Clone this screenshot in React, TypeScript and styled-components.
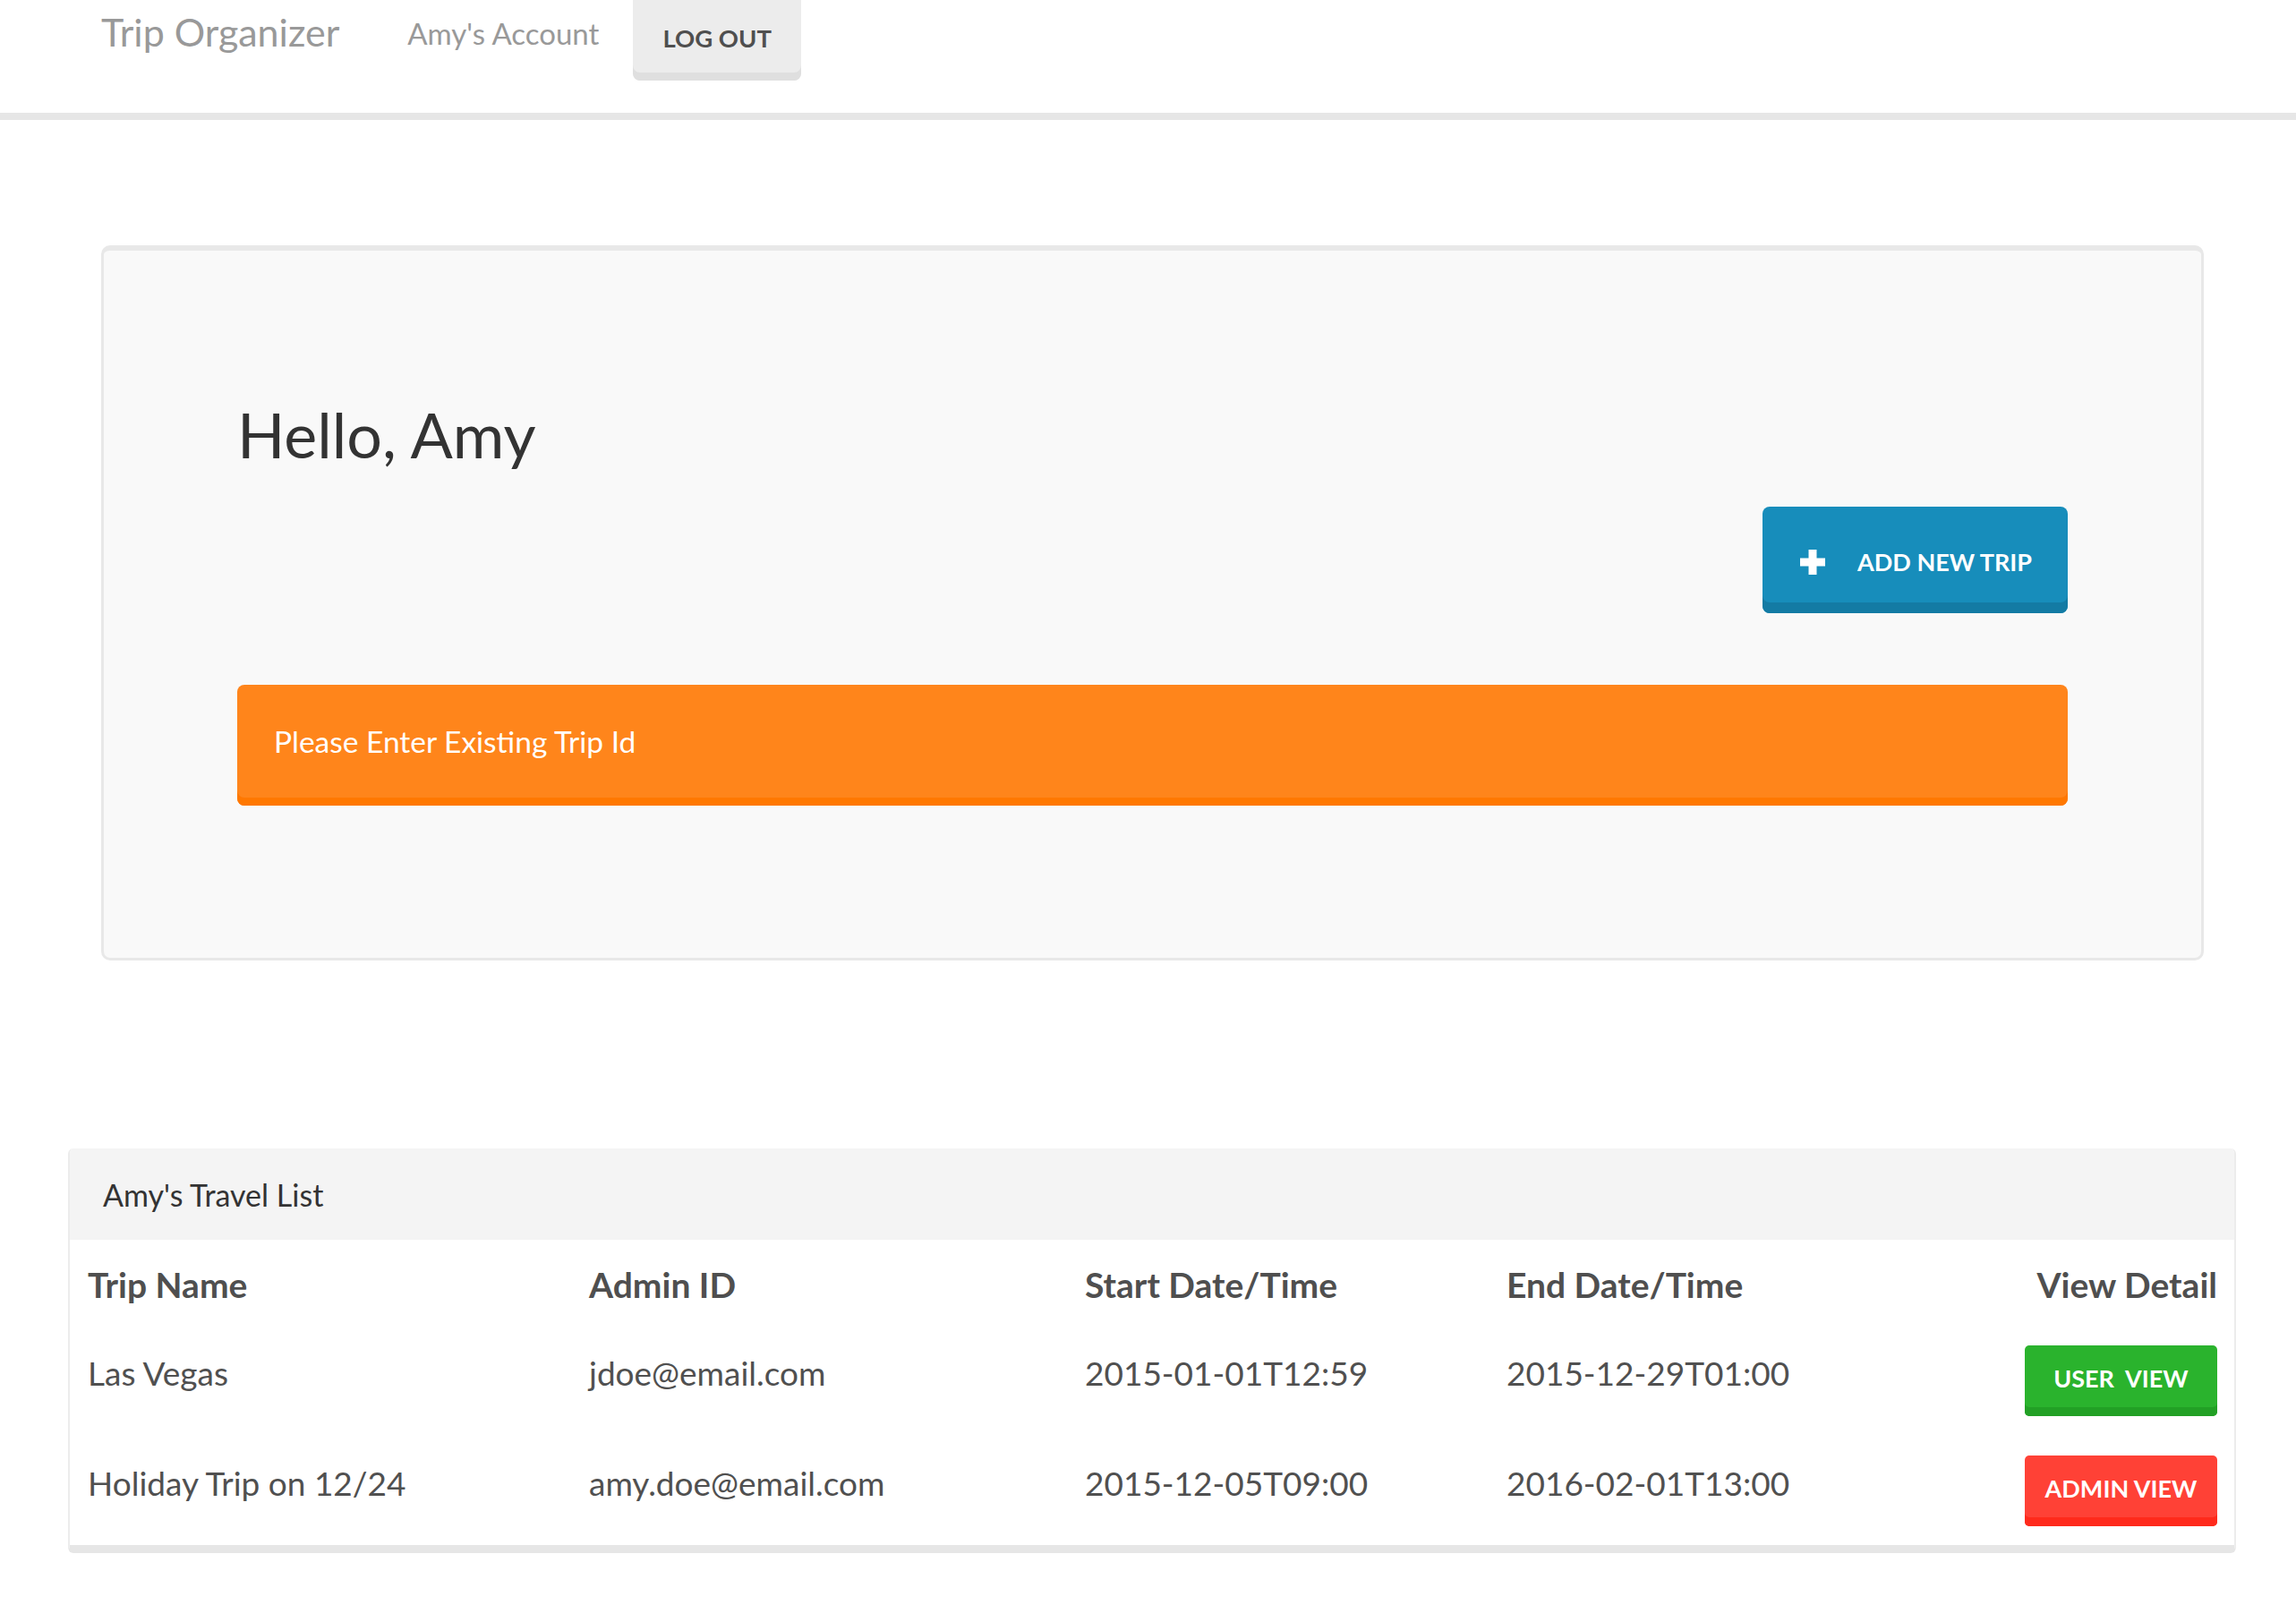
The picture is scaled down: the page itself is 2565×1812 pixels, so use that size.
import React from 'react';
import styled, { createGlobalStyle } from 'styled-components';

const GlobalStyle = createGlobalStyle`
  html, body { margin: 0; padding: 0; background: #ffffff; }
  body { font-family: Lato, "Open Sans", sans-serif; color: #555555; }
  * { box-sizing: border-box; }
`;

const Page = styled.div`
  width: 2565px;
  min-height: 1812px;
  background: #ffffff;
`;

const Navbar = styled.nav`
  height: 134px;
  border-bottom: 8px solid #e6e6e6;
  display: flex;
  align-items: flex-start;
  padding-left: 113px;
`;

const Brand = styled.a`
  font-size: 43px;
  line-height: 72px;
  color: #999999;
  text-decoration: none;
`;

const NavLink = styled.a`
  margin-left: 76px;
  font-size: 33px;
  line-height: 74px;
  color: #999999;
  text-decoration: none;
`;

const NavButton = styled.button`
  margin-left: 38px;
  height: 90px;
  padding: 0 33px 6px;
  border: none;
  border-radius: 0 0 8px 8px;
  background: #ececec;
  box-shadow: inset 0 -9px 0 #dfdfdf;
  color: #4f4f4f;
  font-family: Lato, sans-serif;
  font-weight: 700;
  font-size: 27.5px;
  cursor: pointer;
`;

const Jumbotron = styled.section`
  margin: 140px 0 0 113px;
  width: 2349px;
  height: 799px;
  background: #f9f9f9;
  border: 3px solid #e8e8e8;
  border-top-width: 6px;
  border-radius: 10px;
  padding: 163px 149px 0 149px;
`;

const Greeting = styled.h1`
  margin: 0;
  font-size: 70px;
  line-height: 84px;
  font-weight: 400;
  color: #333333;
`;

const ActionRow = styled.div`
  display: flex;
  justify-content: flex-end;
  margin-top: 39px;
`;

const PrimaryButton = styled.button`
  display: inline-flex;
  align-items: center;
  gap: 36px;
  height: 119px;
  padding: 4px 40px 0 42px;
  border: none;
  border-radius: 8px;
  background: #178dbb;
  box-shadow: inset 0 -12px 0 #137ba4;
  color: #ffffff;
  font-family: Lato, sans-serif;
  font-weight: 700;
  font-size: 27px;
  cursor: pointer;
`;

const Alert = styled.div`
  margin-top: 80px;
  height: 135px;
  display: flex;
  align-items: center;
  padding: 0 0 9px 41px;
  border-radius: 8px;
  background: #ff851b;
  box-shadow: inset 0 -9px 0 #ff7800;
  color: #ffffff;
  font-size: 33.5px;
`;

const ListPanel = styled.section`
  margin: 210px 0 0 76px;
  width: 2422px;
  background: #ffffff;
  border: 2px solid #ececec;
  border-top: none;
  border-bottom: 9px solid #e6e6e6;
  border-radius: 6px;
  padding-bottom: 8px;
  overflow: hidden;
`;

const ListHeading = styled.div`
  height: 102px;
  display: flex;
  align-items: center;
  padding-left: 37px;
  background: #f4f4f4;
  color: #333333;
  font-size: 34px;
`;

const TripGrid = styled.div`
  display: grid;
  grid-template-columns: 560px 554px 471px 1fr 296px;
`;

const HeadCell = styled.div<{ $right?: boolean }>`
  height: 87px;
  display: flex;
  align-items: flex-end;
  justify-content: ${p => (p.$right ? 'flex-end' : 'flex-start')};
  padding: 0 ${p => (p.$right ? '19px' : '0')} 14px 20px;
  font-size: 39px;
  font-weight: 700;
  line-height: 46px;
  color: #4f4f4f;
`;

const Cell = styled.div<{ $right?: boolean }>`
  height: 123px;
  display: flex;
  align-items: center;
  justify-content: ${p => (p.$right ? 'flex-end' : 'flex-start')};
  padding: 0 ${p => (p.$right ? '19px' : '0')} 0 20px;
  font-size: 37px;
  line-height: 44px;
  color: #505050;
`;

const tones = {
  user: { face: '#2ab32d', edge: '#22a025' },
  admin: { face: '#ff4136', edge: '#ff2a1c' },
};

const ViewButton = styled.button<{ $tone: 'user' | 'admin' }>`
  margin-top: 18px;
  width: 215px;
  height: 79px;
  padding: 0 0 6px;
  border: none;
  border-radius: 5px;
  background: ${p => tones[p.$tone].face};
  box-shadow: inset 0 -10px 0 ${p => tones[p.$tone].edge};
  color: #ffffff;
  font-family: Lato, sans-serif;
  font-weight: 700;
  font-size: 27px;
  white-space: pre;
  cursor: pointer;
`;

const PlusIcon = () => (
  <svg width="28" height="28" viewBox="0 0 28 28" aria-hidden="true">
    <rect x="9.5" y="0" width="9" height="28" fill="#ffffff" />
    <rect x="0" y="9.5" width="28" height="9" fill="#ffffff" />
  </svg>
);

const trips = [
  {
    name: 'Las Vegas',
    admin: 'jdoe@email.com',
    start: '2015-01-01T12:59',
    end: '2015-12-29T01:00',
    tone: 'user' as const,
    label: 'USER  VIEW',
  },
  {
    name: 'Holiday Trip on 12/24',
    admin: 'amy.doe@email.com',
    start: '2015-12-05T09:00',
    end: '2016-02-01T13:00',
    tone: 'admin' as const,
    label: 'ADMIN VIEW',
  },
];

export default function App() {
  return (
    <Page>
      <GlobalStyle />
      <Navbar>
        <Brand href="#">Trip Organizer</Brand>
        <NavLink href="#">Amy's Account</NavLink>
        <NavButton>LOG OUT</NavButton>
      </Navbar>

      <Jumbotron>
        <Greeting>Hello, Amy</Greeting>
        <ActionRow>
          <PrimaryButton>
            <PlusIcon />
            ADD NEW TRIP
          </PrimaryButton>
        </ActionRow>
        <Alert>Please Enter Existing Trip Id</Alert>
      </Jumbotron>

      <ListPanel>
        <ListHeading>Amy's Travel List</ListHeading>
        <TripGrid>
          <HeadCell>Trip Name</HeadCell>
          <HeadCell>Admin ID</HeadCell>
          <HeadCell>Start Date/Time</HeadCell>
          <HeadCell>End Date/Time</HeadCell>
          <HeadCell $right>View Detail</HeadCell>
          {trips.map(t => (
            <React.Fragment key={t.name}>
              <Cell>{t.name}</Cell>
              <Cell>{t.admin}</Cell>
              <Cell>{t.start}</Cell>
              <Cell>{t.end}</Cell>
              <Cell $right>
                <ViewButton $tone={t.tone}>{t.label}</ViewButton>
              </Cell>
            </React.Fragment>
          ))}
        </TripGrid>
      </ListPanel>
    </Page>
  );
}
